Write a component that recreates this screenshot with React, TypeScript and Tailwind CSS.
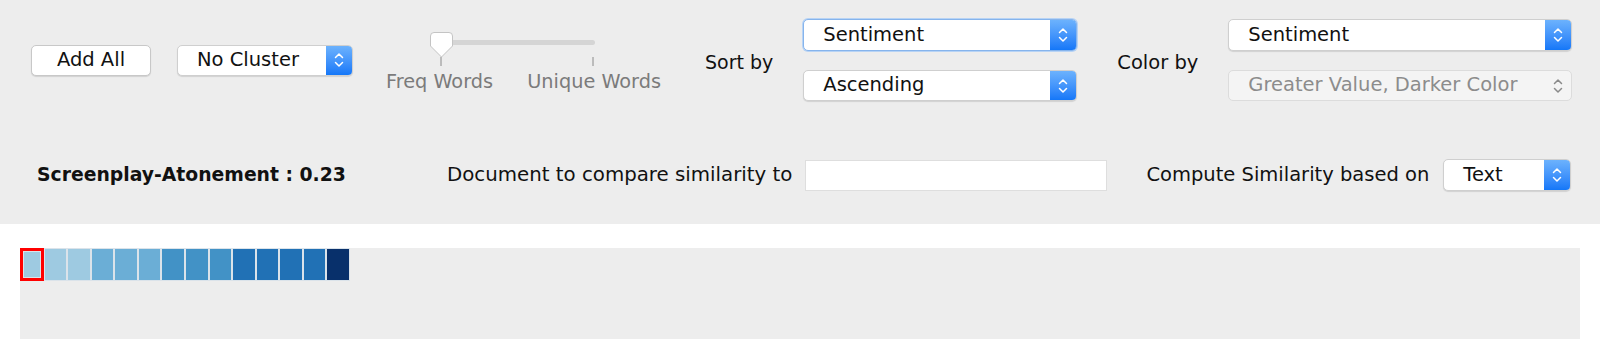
import React from 'react';

const font = { fontFamily: '"DejaVu Sans", "Liberation Sans", sans-serif' };

// up/down chevrons for the mac style popup
const Chevrons: React.FC<{ color?: string }> = ({ color = '#ffffff' }) => (
  <svg width="12" height="20" viewBox="0 0 12 20" fill="none">
    <path d="M2.5 7.5 L6 4 L9.5 7.5" stroke={color} strokeWidth="1.5" strokeLinecap="round" strokeLinejoin="round" />
    <path d="M2.5 12.5 L6 16 L9.5 12.5" stroke={color} strokeWidth="1.5" strokeLinecap="round" strokeLinejoin="round" />
  </svg>
);

interface SelectProps {
  label: string;
  className: string;
  focused?: boolean;
  disabled?: boolean;
}

const Select: React.FC<SelectProps> = ({ label, className, focused, disabled }) => {
  if (disabled) {
    return (
      <div className={`flex items-center rounded-[5px] border border-[#dcdcdc] bg-[#f4f4f4] ${className}`}>
        <span className="flex-1 pl-[19px] text-[#8c8c8c]">{label}</span>
        <div className="flex w-[26px] items-center justify-center">
          <Chevrons color="#8a8a8a" />
        </div>
      </div>
    );
  }
  return (
    <div
      className={`flex items-stretch overflow-hidden rounded-[5px] bg-white ${
        focused
          ? 'border border-[#86b4ec] shadow-[0_0_0_1px_#b7d3f5]'
          : 'border border-[#cfcfcf] shadow-[0_1px_1px_rgba(0,0,0,0.12)]'
      } ${className}`}
    >
      <span className="flex flex-1 items-center pl-[19px] text-[#111]">{label}</span>
      <div className="flex w-[26px] items-center justify-center bg-gradient-to-b from-[#6cb2fd] to-[#1377f8]">
        <Chevrons />
      </div>
    </div>
  );
};

const swatches = [
  '#9ecae1', '#9ecae1', '#9ecae1',
  '#6baed6', '#6baed6', '#6baed6',
  '#4292c6', '#4292c6', '#4292c6',
  '#2171b5', '#2171b5', '#2171b5', '#2171b5',
  '#08306b',
];

export default function App() {
  return (
    <div className="flex h-[339px] w-[1600px] flex-col bg-white text-[19.5px] leading-tight text-[#111]" style={font}>
      {/* controls panel */}
      <div className="bg-[#ededed] pt-[19px] pb-[33px]">
        <div className="flex h-[82px] items-center">
          <button className="ml-[31px] h-[31px] w-[120px] rounded-[5px] border border-[#c8c8c8] bg-white text-[#111] shadow-[0_1px_1px_rgba(0,0,0,0.12)]">
            Add All
          </button>
          <Select label="No Cluster" className="ml-[26px] h-[31px] w-[176px]" />

          {/* slider */}
          <div className="ml-[33px] mt-[6px] flex w-[275px] flex-col">
            <svg width="275" height="35" viewBox="0 0 275 35">
              <rect x="44" y="8" width="165" height="5" rx="2.5" fill="#d5d5d5" />
              <line x1="55" y1="25" x2="55" y2="34" stroke="#8a8a8a" strokeWidth="1" />
              <line x1="207" y1="25" x2="207" y2="34" stroke="#8a8a8a" strokeWidth="1" />
              <path
                d="M48 0.5 H63 A3.5 3.5 0 0 1 66.5 4 V14 L55.5 25 L44.5 14 V4 A3.5 3.5 0 0 1 48 0.5 Z"
                fill="#ffffff"
                stroke="#c4c4c4"
              />
            </svg>
            <div className="mt-[3px] flex justify-between text-[19.3px] text-[#7b7b7b]">
              <span>Freq Words</span>
              <span>Unique Words</span>
            </div>
          </div>

          <span className="ml-[44px] mt-[6px] text-[19px]">Sort by</span>
          <div className="ml-[30px] flex flex-col gap-[19px]">
            <Select label="Sentiment" className="h-[32px] w-[274px]" focused />
            <Select label="Ascending" className="h-[31px] w-[274px]" />
          </div>

          <span className="ml-[40px] mt-[6px]">Color by</span>
          <div className="ml-[30px] flex flex-col gap-[19px]">
            <Select label="Sentiment" className="h-[32px] w-[344px]" />
            <Select label="Greater Value, Darker Color" className="h-[31px] w-[344px]" disabled />
          </div>
        </div>

        <div className="mt-[58px] flex h-[32px] items-center">
          <span className="ml-[37px] w-[310px] shrink-0 whitespace-nowrap text-[18.8px] font-bold">
            Screenplay-Atonement : 0.23
          </span>
          <span className="ml-[100px] text-[19.8px]">Document to compare similarity to</span>
          <div className="ml-[13px] h-[31px] w-[302px] border border-[#dedede] bg-white" />
          <span className="ml-[39px]">Compute Similarity based on</span>
          <Select label="Text" className="ml-[14px] h-[32px] w-[128px]" />
        </div>
      </div>

      {/* swatch strip */}
      <div className="mx-[20px] mt-[24px] flex-1 bg-[#ededed]">
        <div className="flex">
          {swatches.map((c, i) => (
            <div
              key={i}
              className={`h-[33px] w-[23.57px] shrink-0 ${i === 0 ? 'border-[3px] border-[#ff0000]' : ''}`}
            >
              <div className="h-full w-full border border-[#dbe3ea]" style={{ backgroundColor: c }} />
            </div>
          ))}
        </div>
      </div>
    </div>
  );
}
